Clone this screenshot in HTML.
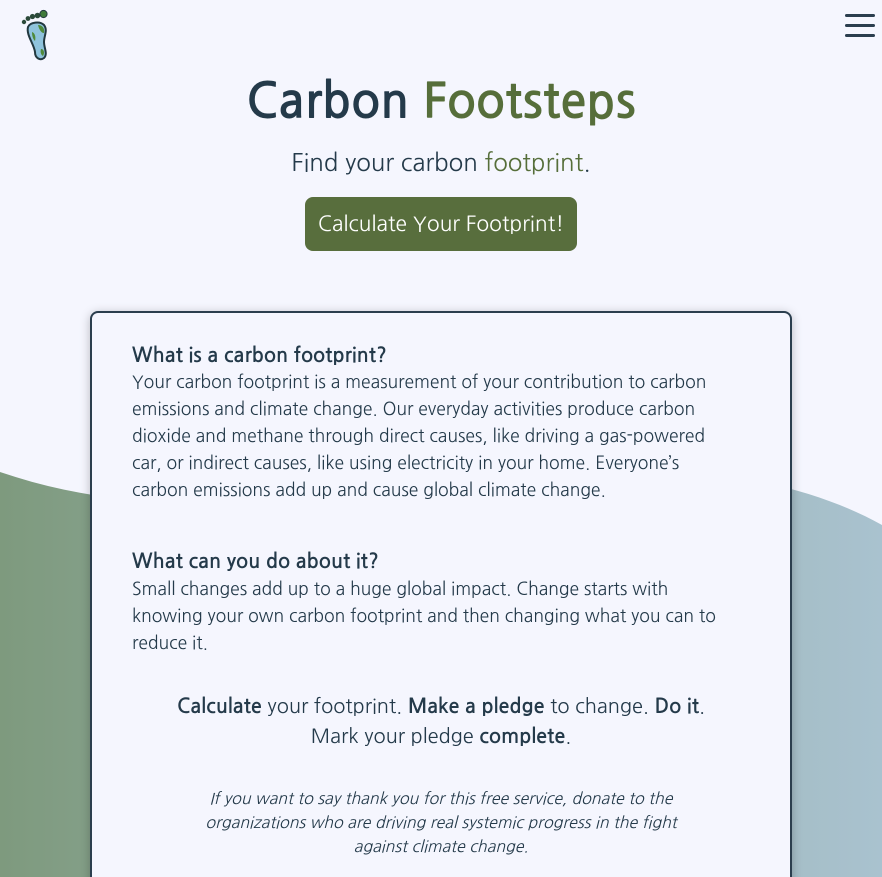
<!DOCTYPE html>
<html><head><meta charset="utf-8"><style>
html,body{margin:0;padding:0;width:882px;height:877px;overflow:hidden}
body{position:relative;background:#f5f6fe;font-family:"NanumGothic","Liberation Sans",sans-serif;color:#243a4a}
.wave{position:absolute;left:0;top:0}
.logo{position:absolute;left:20px;top:8px}
.burger{position:absolute;left:845px;top:14px;width:30px}
.burger div{height:3px;background:#2b3e4e;border-radius:2px;margin-bottom:7px}
h1{position:absolute;top:71px;left:0;width:882px;text-align:center;margin:0;font-size:48px;font-weight:bold;line-height:64px}
h1 span{color:#566e3a}
.sub{position:absolute;top:146px;left:0;width:882px;text-align:center;font-size:24px;line-height:34px}
.sub span{color:#566e3a}
.btn{position:absolute;left:305px;top:197px;width:272px;height:54px;background:#586e3d;border-radius:8px;color:#fff;font-size:21px;line-height:56px;text-align:center}
.card{position:absolute;left:90px;top:311px;width:698px;height:580px;border:2px solid #2b3e4e;border-radius:8px;background:#f5f6fe;box-shadow:0 2px 10px rgba(0,0,0,.25)}
.card h2{position:absolute;left:40px;margin:0;font-size:20px;font-weight:bold;line-height:26px}
.card p{position:absolute;left:40px;width:598px;margin:0;font-size:17.5px;line-height:27px}
.center{position:absolute;left:0;width:698px;text-align:center}
</style></head><body>
<svg class="wave" width="882" height="877"><defs><linearGradient id="g" x1="0" x2="1"><stop offset="0" stop-color="#7e9a7e"/><stop offset="0.5" stop-color="#98b0ab"/><stop offset="1" stop-color="#a9c2cf"/></linearGradient></defs>
<path d="M0,472 C200,540 400,480 600,470 C720,464 820,490 882,525 L882,877 L0,877Z" fill="url(#g)"/></svg>
<svg class="logo" width="32" height="54" viewBox="0 0 32 54">
<circle cx="4" cy="14" r="2.2" fill="#2b4a3a"/><circle cx="8" cy="10.5" r="2.4" fill="#2b4a3a"/><circle cx="12.5" cy="8.5" r="2.6" fill="#2b4a3a"/><circle cx="17.5" cy="7.5" r="2.8" fill="#2b4a3a"/><circle cx="23.5" cy="6" r="3.6" fill="#3f7a3a" stroke="#22383f" stroke-width="1"/>
<path d="M8,19 C10,14 20,13 24,17 C28,22 24,28 24,34 C24,40 28,46 24,50 C20,53 15,50 15,44 C14,36 6,27 8,19Z" fill="#8fc3dc" stroke="#22383f" stroke-width="2"/>
<path d="M18,17 C22,17 25,20 24,25 C21,25 19,21 18,17Z M12,24 C15,25 16,29 15,33 C13,31 12,28 12,24Z M21,41 C24,41 25,45 23,48 C21,47 20,44 21,41Z" fill="#4f8a3a"/></svg>
<div class="burger"><div></div><div></div><div></div></div>
<h1>Carbon <span>Footsteps</span></h1>
<div class="sub">Find your carbon <span>footprint</span>.</div>
<div class="btn">Calculate Your Footprint!</div>
<div class="card">
<h2 style="top:29px">What is a carbon footprint?</h2>
<p style="top:56px">Your carbon footprint is a measurement of your contribution to carbon emissions and climate change. Our everyday activities produce carbon dioxide and methane through direct causes, like driving a gas-powered car, or indirect causes, like using electricity in your home. Everyone’s carbon emissions add up and cause global climate change.</p>
<h2 style="top:235px">What can you do about it?</h2>
<p style="top:263px">Small changes add up to a huge global impact. Change starts with knowing your own carbon footprint and then changing what you can to reduce it.</p>
<div class="center" style="top:378px;font-size:20px;line-height:30px"><b>Calculate</b> your footprint. <b>Make a pledge</b> to change. <b>Do it</b>.<br>Mark your pledge <b>complete</b>.</div>
<div class="center" style="top:474px;font-size:16px;line-height:24px;font-style:italic">If you want to say thank you for this free service, donate to the<br>organizations who are driving real systemic progress in the fight<br>against climate change.</div>
</div>
</body></html>
